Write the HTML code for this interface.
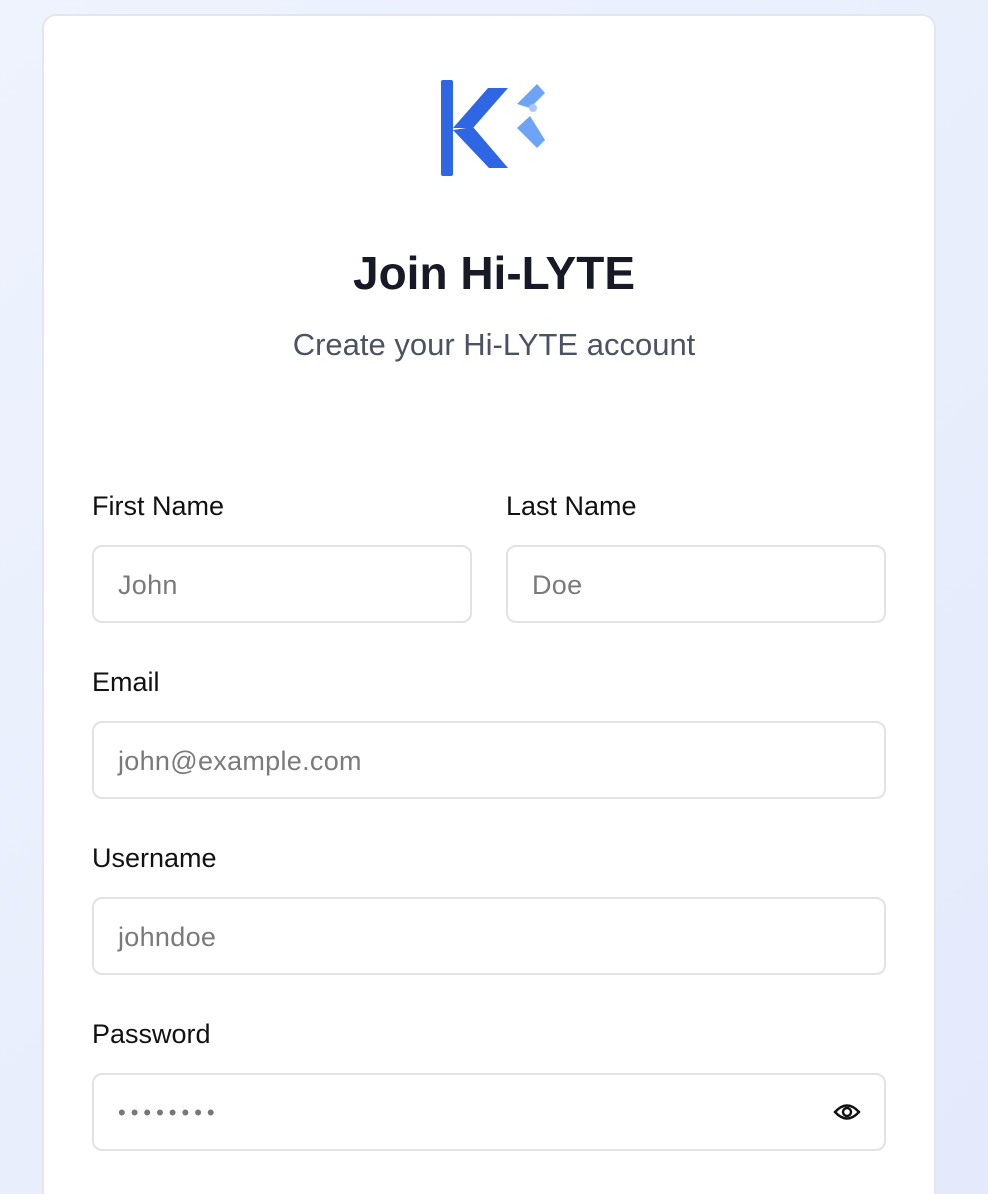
<!DOCTYPE html>
<html style="overflow:hidden"><head><style>
*{box-sizing:border-box;margin:0;padding:0}
html,body{width:988px;height:1194px;overflow:hidden}
body{background:linear-gradient(135deg,#eef3fd,#e4eafc);font-family:"Liberation Sans",sans-serif;position:relative}
.card{position:absolute;left:42px;top:14px;width:894px;height:1200px;background:#fff;border:2px solid #e3e6ec;border-radius:14px}
.t{position:absolute;left:0;width:100%;text-align:center}
.lbl{position:absolute;font-size:27px;color:#111}
.in{position:absolute;height:78px;border:2px solid #e2e2e2;border-radius:10px;font-size:27px;color:#7a7a7a;padding-left:24px;line-height:76px;background:#fff;letter-spacing:0.3px}
</style></head><body>
<div class="card"></div>
<svg style="position:absolute;left:430px;top:74px" width="130" height="110" viewBox="430 74 130 110">
<rect x="441" y="80" width="12" height="96" rx="2" fill="#2f66e3"/>
<polygon points="453,128 488,88 508,88 473,128" fill="#2f66e3"/>
<polygon points="453,130 473,127 508,168 489,168" fill="#2f66e3"/>
<polygon points="517,104 537,84 545,93 530,108" fill="#6ea4f6"/>
<polygon points="517,128 530,116 545,140 537,148" fill="#6ea4f6"/>
<circle cx="533" cy="108" r="4" fill="#a8c8fa"/>
</svg>
<div class="t" style="top:246px;font-size:46px;font-weight:bold;color:#171a26">Join Hi-LYTE</div>
<div class="t" style="top:327px;font-size:31px;color:#4b5261">Create your Hi-LYTE account</div>
<div class="lbl" style="left:92px;top:491px">First Name</div>
<div class="lbl" style="left:506px;top:491px">Last Name</div>
<div class="in" style="left:92px;top:545px;width:380px">John</div>
<div class="in" style="left:506px;top:545px;width:380px">Doe</div>
<div class="lbl" style="left:92px;top:667px">Email</div>
<div class="in" style="left:92px;top:721px;width:794px">john@example.com</div>
<div class="lbl" style="left:92px;top:843px">Username</div>
<div class="in" style="left:92px;top:897px;width:794px">johndoe</div>
<div class="lbl" style="left:92px;top:1019px">Password</div>
<div class="in" style="left:92px;top:1073px;width:794px;letter-spacing:5px;font-size:22px;color:#777">••••••••</div>
<svg style="position:absolute;left:832px;top:1099px" width="30" height="26" viewBox="0 0 30 26">
<path d="M3 13 Q15 0 27 13 Q15 26 3 13 Z" fill="none" stroke="#111" stroke-width="2.4"/>
<circle cx="15" cy="13" r="4" fill="none" stroke="#111" stroke-width="2.4"/>
</svg>
</body></html>
